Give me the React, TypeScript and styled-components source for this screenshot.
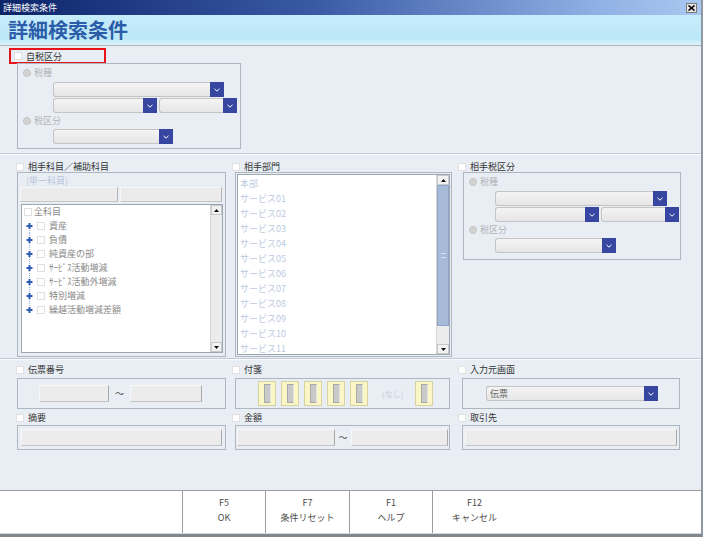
import React from 'react';
import styled, { createGlobalStyle } from 'styled-components';

const GlobalStyle = createGlobalStyle`
  html, body {
    margin: 0;
    padding: 0;
  }
  body {
    font-family: "Noto Sans CJK JP", "Noto Sans", sans-serif;
    font-size: 9px;
    color: #333;
  }
`;

const Window = styled.div`
  width: 703px;
  height: 537px;
  box-sizing: border-box;
  display: flex;
  flex-direction: column;
  background: #e9eef5;
  border-right: 2px solid #8f99a3;
  border-bottom: 3px solid #7f878f;
  overflow: hidden;
`;

const TitleBar = styled.div`
  height: 15px;
  flex: none;
  display: flex;
  align-items: center;
  justify-content: space-between;
  padding: 0 4px 0 3px;
  background: linear-gradient(90deg, #0c2569 0%, #3a5aa6 45%, #8fb0e4 85%, #a9c8f0 100%);
  color: #fff;
  font-size: 9px;
  line-height: 15px;
`;

const CloseButton = styled.div`
  width: 11px;
  height: 10px;
  box-sizing: border-box;
  background: #e6e6e6;
  border: 1px solid #7a7a7a;
  display: flex;
  align-items: center;
  justify-content: center;
`;

const Header = styled.div`
  height: 31px;
  flex: none;
  box-sizing: border-box;
  padding-left: 8px;
  background: linear-gradient(#c6ecfa, #bde8f8 80%, #def4fc);
  border-bottom: 1px solid #abb4bd;
  color: #2c5da9;
  font-size: 20px;
  font-weight: bold;
  line-height: 30px;
`;

const Body = styled.div`
  flex: 1;
  display: flex;
  flex-direction: column;
`;

const TopSection = styled.div`
  padding: 2px 0 4px 9px;
`;

const Highlight = styled.div`
  width: 97px;
  height: 16px;
  box-sizing: border-box;
  border: 2px solid #e8141c;
  display: flex;
  align-items: center;
  gap: 4px;
  padding-left: 3px;
`;

const Separator = styled.div`
  height: 2px;
  box-sizing: border-box;
  border-top: 1px solid #c3cad3;
  border-bottom: 1px solid #f8fbff;
`;

const Columns = styled.div<{ $top: number; $bottom: number }>`
  display: grid;
  grid-template-columns: 218px 226px 226px;
  padding: ${p => p.$top}px 0 ${p => p.$bottom}px 14px;
  row-gap: 4px;
`;

const Column = styled.div`
  display: flex;
  flex-direction: column;
  gap: 3px;
`;

const CheckLabel = styled.label<{ $shift?: number }>`
  display: flex;
  align-items: center;
  gap: 4px;
  height: 9px;
  margin-left: ${p => p.$shift ?? 0}px;
  line-height: 9px;
  font-size: 9px;
  color: #333;
  white-space: nowrap;
`;

const Checkbox = styled.span`
  display: inline-block;
  flex: none;
  width: 8px;
  height: 8px;
  box-sizing: border-box;
  background: #fff;
  border: 1px solid #e0e0e0;
`;

const GroupBox = styled.div<{ $w: number; $h: number; $ml?: number; $mt?: number; $pad?: string }>`
  box-sizing: border-box;
  width: ${p => p.$w}px;
  height: ${p => p.$h}px;
  margin: ${p => p.$mt ?? 0}px 0 0 ${p => p.$ml ?? 0}px;
  padding: ${p => p.$pad ?? '0'};
  border: 1px solid #aeb6bf;
  display: flex;
  flex-direction: column;
`;

const RadioRow = styled.div<{ $gap: number }>`
  display: flex;
  align-items: center;
  gap: 3px;
  height: 9px;
  margin-top: ${p => p.$gap}px;
  color: #b5b5b5;
  line-height: 9px;
`;

const Radio = styled.span`
  width: 8px;
  height: 8px;
  box-sizing: border-box;
  border-radius: 50%;
  background: #d3d3d3;
  border: 1px solid #c4c4c4;
`;

const Indented = styled.div<{ $indent: number; $top: number }>`
  display: flex;
  flex-direction: column;
  gap: 1px;
  margin: ${p => p.$top}px 0 0 ${p => p.$indent - 6}px;
`;

const Row = styled.div<{ $gap: number; $mt?: number }>`
  display: flex;
  align-items: center;
  gap: ${p => p.$gap}px;
  margin-top: ${p => p.$mt ?? 0}px;
`;

const SelectBox = styled.div<{ $w: number }>`
  display: flex;
  width: ${p => p.$w}px;
  height: 15px;
  flex: none;
`;

const SelectField = styled.div`
  flex: 1;
  box-sizing: border-box;
  border: 1px solid #c4c4c4;
  border-right: none;
  border-radius: 3px 0 0 3px;
  background: linear-gradient(#f4f4f4, #e6e6e6);
  color: #666;
  font-size: 9px;
  line-height: 13px;
  padding-left: 3px;
`;

const SelectButton = styled.div`
  width: 14px;
  flex: none;
  background: #3747a1;
  display: flex;
  align-items: center;
  justify-content: center;
`;

const Select = ({ width, text }: { width: number; text?: string }) => (
  <SelectBox $w={width}>
    <SelectField>{text}</SelectField>
    <SelectButton>
      <svg width="6" height="4" viewBox="0 0 6 4">
        <polyline points="0.5,0.8 3,3.2 5.5,0.8" fill="none" stroke="#fff" strokeWidth="1" />
      </svg>
    </SelectButton>
  </SelectBox>
);

type TaxGroupProps = { w: number; h: number; indent: number; wide: number; ml: number; mt: number };

const TaxGroup = ({ w, h, indent, wide, ml, mt }: TaxGroupProps) => (
  <GroupBox $w={w} $h={h} $ml={ml} $mt={mt} $pad="4px 0 0 5px">
    <RadioRow $gap={0}>
      <Radio />
      税種
    </RadioRow>
    <Indented $indent={indent} $top={5}>
      <Select width={wide} />
      <Row $gap={2}>
        <Select width={104} />
        <Select width={78} />
      </Row>
    </Indented>
    <RadioRow $gap={3}>
      <Radio />
      税区分
    </RadioRow>
    <Indented $indent={indent} $top={4}>
      <Select width={wide - 51} />
    </Indented>
  </GroupBox>
);

const Hint = styled.div`
  height: 9px;
  line-height: 9px;
  padding-left: 6px;
  color: #b8c5d9;
`;

const FlatButton = styled.div<{ $w?: number }>`
  height: 15px;
  box-sizing: border-box;
  ${p => (p.$w ? `width: ${p.$w}px;` : 'flex: 1;')}
  background: #ebebeb;
  border: 1px solid #f6f6f6;
  border-right-color: #b4b4b4;
  border-bottom-color: #c6c6c6;
`;

const ListFrame = styled.div<{ $h: number; $tree?: boolean }>`
  display: flex;
  box-sizing: border-box;
  height: ${p => p.$h}px;
  margin: ${p => (p.$tree ? '2px -1px 0 1px' : '0')};
  background: #fff;
  border: 1px solid #9ea7b1;
  overflow: hidden;
`;

const ListItems = styled.div<{ $pad: number }>`
  flex: 1;
  overflow: hidden;
  padding-top: ${p => p.$pad}px;
`;

const TreeRow = styled.div<{ $child?: boolean }>`
  display: flex;
  align-items: center;
  gap: ${p => (p.$child ? 4 : 2)}px;
  height: 14px;
  padding-left: ${p => (p.$child ? 4 : 2)}px;
  color: #8a8a8a;
  line-height: 14px;
  white-space: nowrap;
`;

const ListRow = styled.div`
  height: 15px;
  padding-left: 2px;
  color: #bccadf;
  line-height: 15px;
  white-space: nowrap;
`;

const ScrollTrack = styled.div<{ $w: number }>`
  width: ${p => p.$w}px;
  flex: none;
  display: flex;
  flex-direction: column;
  background: #ececec;
  border-left: 1px solid #d6d6d6;
`;

const ScrollArrow = styled.div`
  height: 10px;
  flex: none;
  display: flex;
  align-items: center;
  justify-content: center;
  background: #f2f2f2;
  border: 1px solid #c9c9c9;
  box-sizing: border-box;
`;

const ScrollThumb = styled.div<{ $h: number }>`
  height: ${p => p.$h}px;
  box-sizing: border-box;
  background: #a7bbd9;
  border: 1px solid #8fa6ca;
  display: flex;
  align-items: center;
  justify-content: center;
`;

const Grip = styled.span`
  width: 5px;
  height: 3px;
  border-top: 1px solid #d6e0ef;
  border-bottom: 1px solid #d6e0ef;
`;

const Spacer = styled.div`
  flex: 1;
`;

const Arrow = ({ down }: { down?: boolean }) => (
  <svg width="5" height="3" viewBox="0 0 5 3">
    <polygon points={down ? '0,0 5,0 2.5,3' : '0,3 5,3 2.5,0'} fill="#111" />
  </svg>
);

const Scrollbar = ({ width, thumb }: { width: number; thumb?: number }) => (
  <ScrollTrack $w={width}>
    <ScrollArrow>
      <Arrow />
    </ScrollArrow>
    {thumb ? (
      <ScrollThumb $h={thumb}>
        <Grip />
      </ScrollThumb>
    ) : null}
    <Spacer />
    <ScrollArrow>
      <Arrow down />
    </ScrollArrow>
  </ScrollTrack>
);

const Expander = ({ first, last }: { first?: boolean; last?: boolean }) => (
  <svg width="7" height="14" viewBox="0 0 7 14">
    <line x1="3.5" y1={first ? 7 : 0} x2="3.5" y2={last ? 7 : 14} stroke="#8fb0e6" strokeWidth="1" strokeDasharray="1 1" />
    <rect x="0.5" y="6" width="6" height="2" fill="#2c5cb8" />
    <rect x="2.5" y="4" width="2" height="6" fill="#2c5cb8" />
  </svg>
);

const InputRowBox = styled(GroupBox)<{ $pl: number; $pr?: number }>`
  flex-direction: row;
  align-items: center;
  padding: 0 ${p => p.$pr ?? 0}px 0 ${p => p.$pl}px;
`;

const TextBox = styled.div<{ $w?: number; $h: number }>`
  box-sizing: border-box;
  height: ${p => p.$h}px;
  ${p => (p.$w ? `width: ${p.$w}px;` : 'flex: 1;')}
  background: #ececec;
  border: 1px solid #f7f7f7;
  border-right-color: #a9a9a9;
  border-bottom-color: #c4c4c4;
`;

const Tilde = styled.span<{ $w: number }>`
  width: ${p => p.$w}px;
  text-align: center;
  color: #444;
  font-size: 9px;
`;

const Tag = styled.div<{ $ml?: number }>`
  width: 18px;
  height: 25px;
  box-sizing: border-box;
  margin-left: ${p => p.$ml ?? 0}px;
  background: #fbf6c6;
  border: 1px solid #d8d2a2;
  display: flex;
  align-items: center;
  justify-content: center;
`;

const TagCore = styled.span`
  width: 7px;
  height: 19px;
  box-sizing: border-box;
  background: #c9c9c9;
  border: 1px solid #a9a9a9;
  border-right-color: #e4e4e4;
`;

const NoneText = styled.span`
  margin-left: 14px;
  color: #c4cad4;
  font-size: 8px;
`;

const Footer = styled.div`
  height: 44px;
  flex: none;
  box-sizing: border-box;
  display: flex;
  background: #fff;
  border-top: 1px solid #9c9c9c;
  border-bottom: 1px solid #d8d8d8;
`;

const FooterBlank = styled.div<{ $w?: number }>`
  ${p => (p.$w ? `width: ${p.$w}px;` : 'flex: 1;')}
`;

const FnButton = styled.div<{ $w: number }>`
  width: ${p => p.$w}px;
  box-sizing: border-box;
  border-left: 1px solid #9c9c9c;
  display: flex;
  flex-direction: column;
  align-items: center;
  padding-top: 7px;
  gap: 5px;
  color: #4c4c4c;
  font-size: 9px;
  line-height: 10px;
  &:last-of-type {
    border-right: 1px solid #9c9c9c;
  }
`;

const accounts = [
  '資産',
  '負債',
  '純資産の部',
  'ｻｰﾋﾞｽ活動増減',
  'ｻｰﾋﾞｽ活動外増減',
  '特別増減',
  '繰越活動増減差額',
];

const departments = [
  '本部',
  ...Array.from({ length: 11 }, (_, i) => `サービス${String(i + 1).padStart(2, '0')}`),
];

const functionKeys = [
  { key: 'F5', label: 'OK', w: 83 },
  { key: 'F7', label: '条件リセット', w: 84 },
  { key: 'F1', label: 'ヘルプ', w: 83 },
  { key: 'F12', label: 'キャンセル', w: 84 },
];

const App: React.FC = () => {
  return (
    <Window>
      <GlobalStyle />
      <TitleBar>
        <span>詳細検索条件</span>
        <CloseButton>
          <svg width="7" height="6" viewBox="0 0 7 6">
            <path d="M0.5 0.5 L6.5 5.5 M6.5 0.5 L0.5 5.5" stroke="#000" strokeWidth="1.6" />
          </svg>
        </CloseButton>
      </TitleBar>
      <Header>詳細検索条件</Header>

      <Body>
        <TopSection>
          <Highlight>
            <Checkbox />
            <span>自税区分</span>
          </Highlight>
          <TaxGroup w={224} h={86} indent={36} wide={171} ml={8} mt={-1} />
        </TopSection>
        <Separator />

        <Columns $top={7} $bottom={1}>
          <Column>
            <CheckLabel $shift={2}>
              <Checkbox />
              相手科目／補助科目
            </CheckLabel>
            <GroupBox $w={209} $h={185} $ml={3} $mt={-2} $pad="3px 3px 0 2px">
              <Hint>(単一科目)</Hint>
              <Row $gap={2} $mt={2}>
                <FlatButton $w={98} />
                <FlatButton />
              </Row>
              <ListFrame $h={149} $tree>
                <ListItems $pad={0}>
                  <TreeRow>
                    <Checkbox />
                    全科目
                  </TreeRow>
                  {accounts.map((name, i) => (
                    <TreeRow key={name} $child>
                      <Expander first={i === 0} last={i === accounts.length - 1} />
                      <Checkbox />
                      {name}
                    </TreeRow>
                  ))}
                </ListItems>
                <Scrollbar width={11} />
              </ListFrame>
            </GroupBox>
          </Column>

          <Column>
            <CheckLabel>
              <Checkbox />
              相手部門
            </CheckLabel>
            <GroupBox $w={217} $h={185} $ml={3} $mt={-2} $pad="1px">
              <ListFrame $h={181}>
                <ListItems $pad={1}>
                  {departments.map(name => (
                    <ListRow key={name}>{name}</ListRow>
                  ))}
                </ListItems>
                <Scrollbar width={12} thumb={141} />
              </ListFrame>
            </GroupBox>
          </Column>

          <Column>
            <CheckLabel>
              <Checkbox />
              相手税区分
            </CheckLabel>
            <TaxGroup w={218} h={88} indent={32} wide={172} ml={5} mt={-2} />
          </Column>
        </Columns>
        <Separator />

        <Columns $top={5} $bottom={0}>
          <Column>
            <CheckLabel $shift={2}>
              <Checkbox />
              伝票番号
            </CheckLabel>
            <InputRowBox $w={209} $h={31} $ml={3} $mt={1} $pl={21}>
              <TextBox $w={70} $h={17} />
              <Tilde $w={21}>～</Tilde>
              <TextBox $w={72} $h={17} />
            </InputRowBox>
          </Column>
          <Column>
            <CheckLabel>
              <Checkbox />
              付箋
            </CheckLabel>
            <InputRowBox $w={215} $h={31} $ml={3} $mt={1} $pl={22}>
              {[0, 1, 2, 3, 4].map(i => (
                <Tag key={i} $ml={i === 0 ? 0 : 5}>
                  <TagCore />
                </Tag>
              ))}
              <NoneText>(なし)</NoneText>
              <Tag $ml={12}>
                <TagCore />
              </Tag>
            </InputRowBox>
          </Column>
          <Column>
            <CheckLabel>
              <Checkbox />
              入力元画面
            </CheckLabel>
            <InputRowBox $w={218} $h={31} $ml={4} $mt={1} $pl={23}>
              <Select width={172} text="伝票" />
            </InputRowBox>
          </Column>

          <Column>
            <CheckLabel $shift={2}>
              <Checkbox />
              摘要
            </CheckLabel>
            <InputRowBox $w={209} $h={25} $ml={3} $pl={3} $pr={3}>
              <TextBox $h={17} />
            </InputRowBox>
          </Column>
          <Column>
            <CheckLabel>
              <Checkbox />
              金額
            </CheckLabel>
            <InputRowBox $w={215} $h={25} $ml={3} $pl={1} $pr={1}>
              <TextBox $w={98} $h={17} />
              <Tilde $w={16}>～</Tilde>
              <TextBox $h={17} />
            </InputRowBox>
          </Column>
          <Column>
            <CheckLabel>
              <Checkbox />
              取引先
            </CheckLabel>
            <InputRowBox $w={218} $h={25} $ml={4} $pl={2} $pr={2}>
              <TextBox $h={17} />
            </InputRowBox>
          </Column>
        </Columns>
      </Body>

      <Footer>
        <FooterBlank $w={182} />
        {functionKeys.map(fk => (
          <FnButton key={fk.key} $w={fk.w}>
            <span>{fk.key}</span>
            <span>{fk.label}</span>
          </FnButton>
        ))}
        <FooterBlank />
      </Footer>
    </Window>
  );
};

export default App;
